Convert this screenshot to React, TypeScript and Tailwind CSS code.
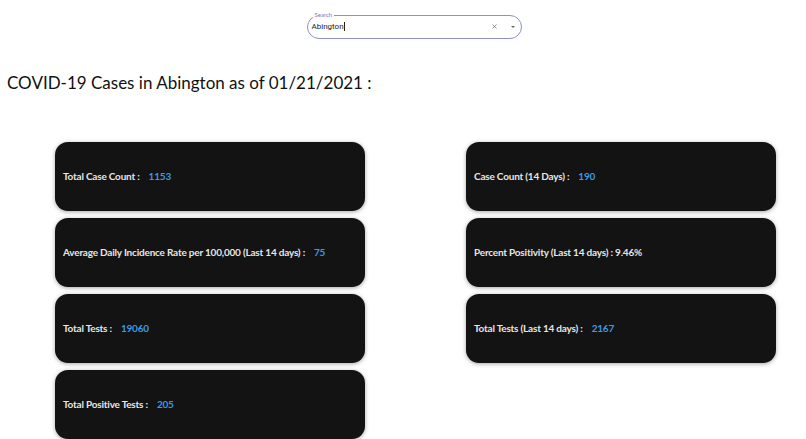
import { X } from 'lucide-react';

interface Stat {
  label: string;
  value: string;
  inline?: boolean;
}

const leftStats: Stat[] = [
  { label: 'Total Case Count :', value: '1153' },
  { label: 'Average Daily Incidence Rate per 100,000 (Last 14 days) :', value: '75' },
  { label: 'Total Tests :', value: '19060' },
  { label: 'Total Positive Tests :', value: '205' },
];

const rightStats: Stat[] = [
  { label: 'Case Count (14 Days) :', value: '190' },
  { label: 'Percent Positivity (Last 14 days) :', value: '9.46%', inline: true },
  { label: 'Total Tests (Last 14 days) :', value: '2167' },
];

function StatCard({ stat }: { stat: Stat }) {
  return (
    <div className="h-[69px] w-[310px] rounded-[13px] bg-[#131313] shadow-[0_1px_4px_rgba(0,0,0,0.35)] flex items-center px-[8px]">
      <span className="text-[10px] font-bold tracking-[-0.2px] text-[#e6e6e6]">
        {stat.label}
        {stat.inline ? (
          <span> {stat.value}</span>
        ) : (
          <span className="ml-[9px] text-[#3a9be8]">{stat.value}</span>
        )}
      </span>
    </div>
  );
}

function SearchBox() {
  return (
    <fieldset className="w-[215px] h-[27px] border border-[#8a8fd0] rounded-[12px] px-[4px] flex items-center">
      <legend className="ml-[1px] px-[2px] text-[6px] leading-[6px] text-[#6f78c4]">Search</legend>
      <div className="flex items-center w-full -mt-[3px]">
        <span className="text-[8px] text-[#222] font-['Roboto',sans-serif]">Abington</span>
        <span className="w-px h-[9px] bg-[#222]" />
        <div className="flex-1" />
        <X className="w-[7px] h-[7px] text-[#666] mr-[11px]" strokeWidth={2.5} />
        <svg width="8" height="8" viewBox="0 0 8 8">
          <path d="M2 3 L4 5 L6 3 Z" fill="#666" />
        </svg>
      </div>
    </fieldset>
  );
}

export default function App() {
  return (
    <div className="min-h-[439px] bg-white font-['Lato',sans-serif]">
      <div className="flex justify-center pt-[12px] pl-[22px]">
        <SearchBox />
      </div>
      <h1 className="mt-[32px] ml-[7px] text-[17px] leading-[24px] text-[#111]">
        COVID-19 Cases in Abington as of 01/21/2021 :
      </h1>
      <div className="mt-[47px] pl-[55px] flex gap-[101px]">
        <div className="flex flex-col gap-[7px]">
          {leftStats.map((s) => (
            <StatCard key={s.label} stat={s} />
          ))}
        </div>
        <div className="flex flex-col gap-[7px]">
          {rightStats.map((s) => (
            <StatCard key={s.label} stat={s} />
          ))}
        </div>
      </div>
    </div>
  );
}
